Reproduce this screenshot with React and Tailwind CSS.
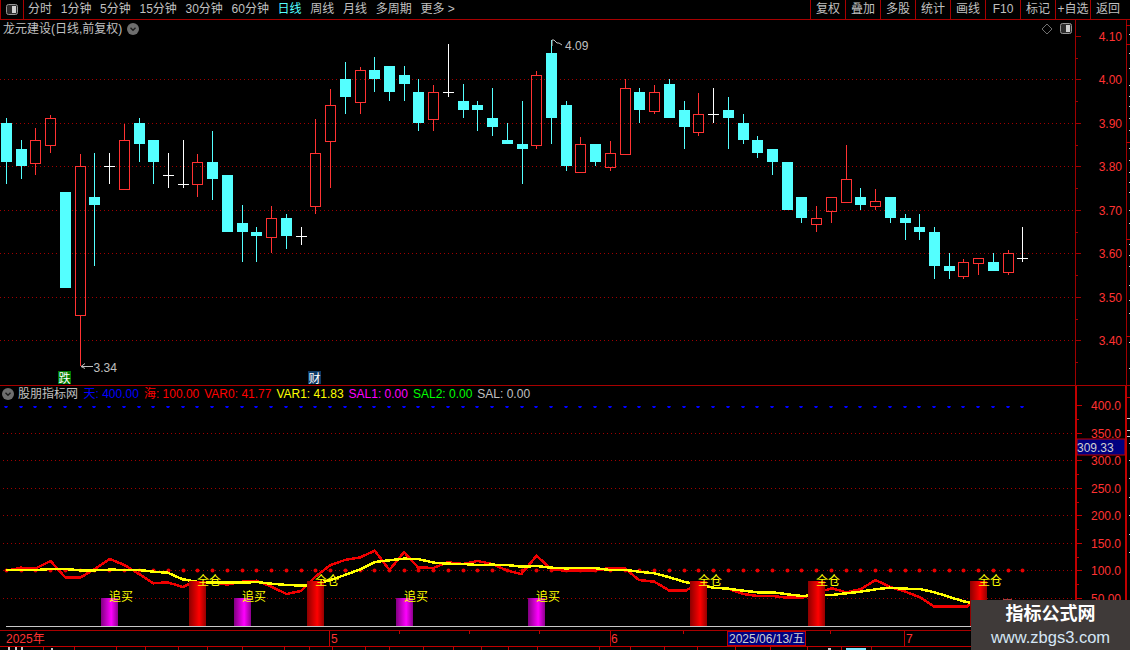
import React from 'react';

const RED = '#ff3232';
const DARK_RED = '#a00000';
const CYAN = '#54ffff';

// wick top, body top, body bottom, wick bottom, kind (c = down, r = up, w = doji)
const candles = [
  [118, 123, 162, 184, 'c'], [140, 149, 166, 179, 'c'], [128, 140, 163, 175, 'r'], [115, 118, 145, 153, 'r'],
  [192, 192, 288, 288, 'c'], [154, 166, 315, 366, 'r'], [153, 197, 205, 266, 'c'], [153, 166, 166, 184, 'w'],
  [124, 140, 189, 189, 'r'], [118, 123, 144, 162, 'c'], [140, 140, 162, 184, 'c'], [153, 175, 175, 188, 'w'],
  [140, 184, 184, 188, 'w'], [154, 162, 184, 197, 'r'], [131, 162, 179, 200, 'c'], [175, 175, 232, 232, 'c'],
  [205, 223, 232, 262, 'c'], [227, 232, 236, 262, 'c'], [206, 218, 237, 253, 'r'], [214, 218, 236, 249, 'c'],
  [227, 236, 236, 245, 'w'], [119, 153, 206, 214, 'r'], [89, 105, 141, 188, 'r'], [62, 79, 97, 114, 'c'],
  [67, 70, 102, 114, 'r'], [57, 70, 79, 92, 'c'], [66, 66, 92, 101, 'c'], [66, 75, 84, 101, 'c'],
  [79, 92, 123, 131, 'c'], [85, 92, 119, 131, 'r'], [44, 92, 92, 97, 'w'], [84, 101, 110, 118, 'c'],
  [101, 105, 110, 131, 'c'], [88, 118, 127, 136, 'c'], [123, 140, 144, 144, 'c'], [101, 144, 149, 184, 'c'],
  [71, 75, 145, 149, 'r'], [40, 53, 118, 144, 'c'], [101, 105, 166, 171, 'c'], [137, 144, 172, 172, 'r'],
  [144, 144, 162, 166, 'c'], [141, 153, 167, 171, 'r'], [79, 88, 154, 154, 'r'], [88, 92, 110, 123, 'c'],
  [85, 92, 111, 114, 'r'], [79, 84, 118, 118, 'c'], [101, 110, 127, 149, 'c'], [93, 114, 132, 136, 'r'],
  [88, 114, 114, 123, 'w'], [97, 110, 118, 149, 'c'], [114, 123, 140, 144, 'c'], [136, 140, 153, 158, 'c'],
  [149, 149, 162, 175, 'c'], [162, 162, 210, 210, 'c'], [197, 197, 218, 223, 'c'], [206, 218, 224, 232, 'r'],
  [197, 197, 211, 223, 'r'], [145, 179, 202, 202, 'r'], [188, 197, 205, 210, 'c'], [189, 201, 206, 210, 'r'],
  [197, 197, 218, 223, 'c'], [214, 218, 223, 240, 'c'], [214, 227, 232, 240, 'c'], [227, 232, 266, 279, 'c'],
  [253, 266, 271, 279, 'c'], [259, 262, 276, 279, 'r'], [258, 258, 263, 275, 'r'], [253, 262, 271, 271, 'c'],
  [250, 253, 272, 275, 'r'], [227, 258, 258, 262, 'w'],
];

const cx = (i) => Math.round(6 + 14.73 * i);

const left = (x, y) => `${(x / 2.775).toFixed(1)},${(540 + y / 3).toFixed(1)}`;
const right = (x, y) => `${(565 + x / 2.775).toFixed(1)},${(540 + y / 3).toFixed(1)}`;

const yellowLine = [
  ...[[17,90],[100,90],[140,87],[182,87],[222,91],[262,91],[305,89],[387,90],[425,95],[465,98],[507,118],[530,122],[550,126],[590,128],[630,128],[672,128],[712,126],[753,131],[795,135],[850,137],[880,130],[917,120],[957,105],[1000,88],[1040,66],[1081,61],[1121,56],[1160,57],[1205,68],[1243,71],[1285,72],[1325,75],[1366,74],[1408,75],[1447,80],[1489,78],[1530,83]].map(([x, y]) => left(x, y)),
  ...[[0,85],[80,84],[125,90],[170,90],[205,95],[248,100],[290,112],[330,125],[370,135],[412,143],[453,146],[495,152],[535,157],[577,157],[617,163],[658,168],[700,165],[740,165],[780,160],[820,155],[862,148],[900,143],[945,146],[985,147],[1025,157],[1065,170],[1105,184],[1125,188]].map(([x, y]) => right(x, y)),
].join(' ');

const redLine = [
  ...[[17,92],[58,83],[100,85],[140,63],[182,113],[222,113],[262,88],[305,57],[345,75],[387,103],[425,130],[465,127],[507,141],[530,130],[590,125],[630,134],[672,125],[712,122],[753,140],[795,162],[835,153],[875,110],[917,75],[957,60],[1000,52],[1040,32],[1081,90],[1121,36],[1160,82],[1202,84],[1243,67],[1285,72],[1325,63],[1366,72],[1408,92],[1447,102],[1489,47],[1530,88]].map(([x, y]) => left(x, y)),
  ...[[0,92],[80,92],[125,84],[165,84],[205,120],[248,125],[290,152],[335,152],[370,130],[412,143],[453,146],[495,162],[535,168],[577,168],[617,173],[658,173],[700,158],[740,145],[780,157],[820,148],[862,120],[900,140],[945,155],[985,172],[1025,200],[1065,200],[1115,200],[1125,190]].map(([x, y]) => right(x, y)),
].join(' ');

const priceGrid = [79, 123, 166, 210, 253, 297, 340];
const lowerGrid = [433, 460, 488, 515, 543, 570, 598];
const priceLabels = [['4.10', 36], ['4.00', 79], ['3.90', 123], ['3.80', 166], ['3.70', 210], ['3.60', 253], ['3.50', 297], ['3.40', 340]];
const lowerLabels = [['400.0', 405], ['350.0', 433], ['300.0', 460], ['250.0', 488], ['200.0', 515], ['150.0', 543], ['100.0', 570], ['50.00', 598]];

const buyBars = [101, 234, 396, 528];
const fullBars = [189, 307, 690, 808, 970];

const toolbarLeft = ['分时', '1分钟', '5分钟', '15分钟', '30分钟', '60分钟', '日线', '周线', '月线', '多周期', '更多 >'];
const toolbarRight = ['复权', '叠加', '多股', '统计', '画线', 'F10', '标记', '+自选'];

const legend = [
  ['天: 400.00', 'text-[#0000ff]'],
  ['海: 100.00', 'text-[#ff0000]'],
  ['VAR0: 41.77', 'text-[#ff0000]'],
  ['VAR1: 41.83', 'text-[#ffff00]'],
  ['SAL1: 0.00', 'text-[#ff00ff]'],
  ['SAL2: 0.00', 'text-[#00ff00]'],
  ['SAL: 0.00', 'text-[#c0c0c0]'],
];

const Candle = ({ c, i }) => {
  const [top, bodyTop, bodyBot, bot, kind] = c;
  const x = cx(i);
  if (kind === 'w') {
    return (
      <g fill="#ffffff">
        <rect x={x} y={top} width="1" height={bot - top} />
        <rect x={x - 5} y={bodyTop} width="11" height="1" />
      </g>
    );
  }
  if (kind === 'c') {
    return (
      <g fill={CYAN}>
        <rect x={x} y={top} width="1" height={bot - top} />
        <rect x={x - 5} y={bodyTop} width="11" height={bodyBot - bodyTop} />
      </g>
    );
  }
  return (
    <g>
      <rect x={x} y={top} width="1" height={bodyTop - top} fill={RED} />
      <rect x={x} y={bodyBot} width="1" height={bot - bodyBot} fill={RED} />
      <rect x={x - 4.5} y={bodyTop + 0.5} width="10" height={bodyBot - bodyTop} fill="none" stroke={RED} />
    </g>
  );
};

const WindowIcon = () => (
  <svg width="12" height="11" viewBox="0 0 12 11">
    <rect x="0.5" y="0.5" width="11" height="10" rx="2" fill="#2c2c2c" stroke="#959595" />
    <rect x="6" y="2" width="4" height="7" fill="#d0d0d0" />
  </svg>
);

const ChevronDot = () => (
  <svg width="12" height="12" viewBox="0 0 12 12">
    <circle cx="6" cy="6" r="6" fill="#6e6e6e" />
    <path d="M3.5 4.8 L6 7.3 L8.5 4.8" fill="none" stroke="#1c1c1c" strokeWidth="1.4" />
  </svg>
);

const PriceChart = () => (
  <svg className="block" width="1075" height="348" viewBox="0 37 1075 348" fontFamily="'Liberation Sans', sans-serif" fontSize="12">
    {priceGrid.map((y) => (
      <line key={y} x1="0" x2="1075" y1={y + 0.5} y2={y + 0.5} stroke={DARK_RED} strokeDasharray="1 3" />
    ))}
    {candles.map((c, i) => <Candle key={i} c={c} i={i} />)}
    <polyline points="552,46 552,40 554,40 557,43 559,43 562,45" fill="none" stroke="#c0c0c0" />
    <text x="565" y="49.5" fill="#c0c0c0">4.09</text>
    <path d="M81 366.5 H93 M81 366.5 L85 363.5 M81 366.5 L85 368.5" fill="none" stroke="#c0c0c0" />
    <text x="93.5" y="371.5" fill="#c0c0c0">3.34</text>
    <rect x="58" y="371" width="13" height="13" fill="#007a00" />
    <text x="58.5" y="382.5" fill="#ffffff" fontFamily="'Noto Sans CJK SC', sans-serif">跌</text>
    <rect x="308" y="371" width="13" height="13" fill="#0f3a66" />
    <text x="308.5" y="382.5" fill="#ffffff" fontFamily="'Noto Sans CJK SC', sans-serif">财</text>
  </svg>
);

const PriceAxis = () => (
  <svg className="block" width="55" height="365" viewBox="1075 20 55 365" fontFamily="'Liberation Sans', sans-serif" fontSize="12">
    <rect x="1075" y="20" width="1" height="365" fill={DARK_RED} />
    <rect x="1126" y="20" width="1" height="365" fill={DARK_RED} />
    {priceLabels.map(([t, y]) => (
      <g key={t}>
        <rect x="1075" y={y} width="6" height="1" fill={DARK_RED} />
        <text x="1122" y={y + 4.5} fill={RED} textAnchor="end">{t}</text>
      </g>
    ))}
    {[58, 101, 145, 188, 232, 275, 319, 362].map((y) => (
      <rect key={y} x="1075" y={y} width="3" height="1" fill={DARK_RED} />
    ))}
    {[25, 44, 142, 239, 336].map((y) => (
      <rect key={y} x="1126" y={y} width="4" height="1" fill="#c00000" />
    ))}
    {[34, 53, 68, 85, 96, 106, 118, 130, 148, 160, 172, 182, 192, 210, 223, 244, 255, 266, 285, 300, 313, 342, 368].map((y) => (
      <rect key={y} x="1129" y={y} width="1" height="1" fill="#d0d0d0" />
    ))}
  </svg>
);

const IndicatorChart = () => (
  <svg className="block" width="1075" height="229" viewBox="0 401 1075 229" fontFamily="'Noto Sans CJK SC', sans-serif" fontSize="12">
    <defs>
      <linearGradient id="redBar">
        <stop offset="0" stopColor="#8c0000" />
        <stop offset="0.6" stopColor="#ff0000" />
        <stop offset="1" stopColor="#960000" />
      </linearGradient>
      <linearGradient id="purpleBar">
        <stop offset="0" stopColor="#800080" />
        <stop offset="0.6" stopColor="#ff00ff" />
        <stop offset="1" stopColor="#8c008c" />
      </linearGradient>
    </defs>
    {lowerGrid.map((y) => (
      <line key={y} x1="3" x2="1075" y1={y + 0.5} y2={y + 0.5} stroke={DARK_RED} strokeDasharray="1 3" />
    ))}
    {candles.map((_, i) => (
      <path key={i} d={`M${cx(i) - 2} 406 h4 l-1 2 h-2 z`} fill="#0000ff" />
    ))}
    {candles.map((_, i) => (
      <circle key={i} cx={cx(i) + 0.5} cy="570.5" r="2" fill="#e80000" />
    ))}
    <polyline points={redLine} fill="none" stroke="#f00000" strokeWidth="2.5" shapeRendering="crispEdges" />
    <polyline points={yellowLine} fill="none" stroke="#ffff00" strokeWidth="2.5" shapeRendering="crispEdges" />
    <rect x="6" y="626" width="1069" height="1" fill="#c8c8c8" />
    {buyBars.map((x) => (
      <g key={x}>
        <rect x={x} y="598" width="17" height="28" fill="url(#purpleBar)" />
        <text x={x + 8} y="600.5" fill="#ffff00">追买</text>
      </g>
    ))}
    {fullBars.map((x) => (
      <g key={x}>
        <rect x={x} y="581" width="17" height="45" fill="url(#redBar)" />
        <text x={x + 8} y="585" fill="#ffff00">全仓</text>
      </g>
    ))}
    <rect x="1003" y="599" width="9" height="1" fill="#a04040" />
  </svg>
);

const IndicatorAxis = () => (
  <svg className="block" width="55" height="244" viewBox="1075 386 55 244" fontFamily="'Liberation Sans', sans-serif" fontSize="12">
    <rect x="1075" y="386" width="2" height="244" fill="#c00000" />
    <rect x="1125" y="386" width="2" height="244" fill="#c00000" />
    {lowerLabels.map(([t, y]) => (
      <g key={t}>
        <rect x="1077" y={y} width="5" height="1" fill="#c00000" />
        <text x="1121" y={y + 4.5} fill={RED} textAnchor="end">{t}</text>
      </g>
    ))}
    {[419, 447, 474, 502, 529, 557, 584, 612].map((y) => (
      <rect key={y} x="1077" y={y} width="2" height="1" fill="#c00000" />
    ))}
    <rect x="1127" y="397" width="3" height="1" fill="#c00000" />
    <rect x="1127" y="418" width="3" height="1" fill="#d0d0d0" />
    <rect x="1127" y="430" width="3" height="1" fill="#d0d0d0" />
    <rect x="1127" y="436" width="3" height="1" fill="#d0d0d0" />
    {[443, 460, 478, 497, 515, 534, 552].map((y) => (
      <rect key={y} x="1129" y={y} width="1" height="1" fill="#d0d0d0" />
    ))}
    <rect x="1077" y="439" width="48" height="16" fill="#000080" stroke="#c00000" />
    <text x="1077" y="451.5" fill="#d0d0d0">309.33</text>
  </svg>
);

const TimeAxis = () => (
  <svg className="block" width="1130" height="19" viewBox="0 631 1130 19" fontFamily="'Liberation Sans', 'Noto Sans CJK SC', sans-serif" fontSize="12">
    <rect x="0" y="646" width="1130" height="1" fill="#c00000" />
    {[329, 610, 904].map((x) => (
      <rect key={x} x={x} y="631" width="1" height="15" fill="#c00000" />
    ))}
    {[399, 469, 539, 683, 830].map((x) => (
      <rect key={x} x={x} y="631" width="1" height="3" fill="#c00000" />
    ))}
    <text x="6" y="643" fill={RED}>2025年</text>
    <text x="331" y="643" fill={RED}>5</text>
    <text x="611" y="643" fill={RED}>6</text>
    <text x="906" y="643" fill={RED}>7</text>
    {[43, 74, 116, 145, 178, 207, 242, 284, 309, 332, 365, 389, 423, 453, 481, 508, 537, 599, 630, 664, 697, 735, 770, 807, 841, 871].map((x) => (
      <rect key={x} x={x} y="647" width="1" height="3" fill="#c00000" />
    ))}
    <rect x="8" y="647" width="2" height="3" fill="#c8c8c8" />
    <rect x="15" y="647" width="2" height="3" fill="#c8c8c8" />
    <rect x="21" y="647" width="2" height="3" fill="#c8c8c8" />
    <rect x="51" y="648" width="2" height="2" fill="#c8c8c8" />
    <rect x="828" y="648" width="3" height="2" fill="#c8c8c8" />
    <rect x="846" y="648" width="20" height="2" fill="#7fe8ff" />
    <rect x="727.5" y="631.5" width="78" height="14" fill="#000080" stroke="#c00000" />
    <text x="729" y="643" fill="#d0d0d0">2025/06/13/五</text>
  </svg>
);

export default function App() {
  return (
    <div className="relative w-[1130px] h-[650px] overflow-hidden bg-black text-[12px] text-[#c0c0c0] font-['Liberation_Sans','Noto_Sans_CJK_SC',sans-serif]">
      {/* toolbar */}
      <div className="flex h-[20px] border-b border-[#a80000] leading-[19px]">
        <div className="flex w-[24px] items-center justify-center border-x border-[#a80000]">
          <WindowIcon />
        </div>
        <div className="ml-[4px] flex gap-[8.7px]">
          {toolbarLeft.map((t) => (
            <span key={t} className={t === '日线' ? 'text-[#54ffff]' : ''}>{t}</span>
          ))}
        </div>
        <div className="ml-auto flex w-[320px]">
          {toolbarRight.map((t) => (
            <span key={t} className="w-[35px] border-l border-[#a80000] text-center">{t}</span>
          ))}
          <span className="flex-1 border-l border-[#a80000] pr-[5px] text-center">返回</span>
        </div>
      </div>

      {/* price panel */}
      <div className="flex h-[365px]">
        <div className="w-[1075px]">
          <div className="flex h-[17px] items-center pl-[3px]">
            <span>龙元建设(日线,前复权)</span>
            <span className="ml-[5px] flex"><ChevronDot /></span>
            <svg className="ml-auto" width="12" height="12" viewBox="0 0 12 12">
              <path d="M6 1 L11 6 L6 11 L1 6 Z" fill="none" stroke="#707070" />
            </svg>
            <span className="ml-[7px] mr-[3px] flex"><WindowIcon /></span>
          </div>
          <PriceChart />
        </div>
        <PriceAxis />
      </div>

      {/* indicator panel */}
      <div className="flex h-[246px] border-y border-[#a80000]">
        <div className="w-[1075px]">
          <div className="flex h-[15px] items-center pl-[2px]">
            <ChevronDot />
            <span className="ml-[4px] w-[65.5px]">股朋指标网</span>
            <div className="flex gap-[5px] whitespace-pre">
              {legend.map(([t, color]) => (
                <span key={t} className={color}>{t}</span>
              ))}
            </div>
          </div>
          <IndicatorChart />
        </div>
        <IndicatorAxis />
      </div>

      <TimeAxis />

      {/* watermark */}
      <div className="absolute bottom-0 right-0 flex h-[50px] w-[159px] flex-col items-center justify-center bg-[#3f3a39]">
        <span className="text-[18px] font-bold leading-[24px] text-white">指标公式网</span>
        <span className="text-[16.5px] leading-[22px] text-[#d5e6f5]">www.zbgs3.com</span>
      </div>
    </div>
  );
}
